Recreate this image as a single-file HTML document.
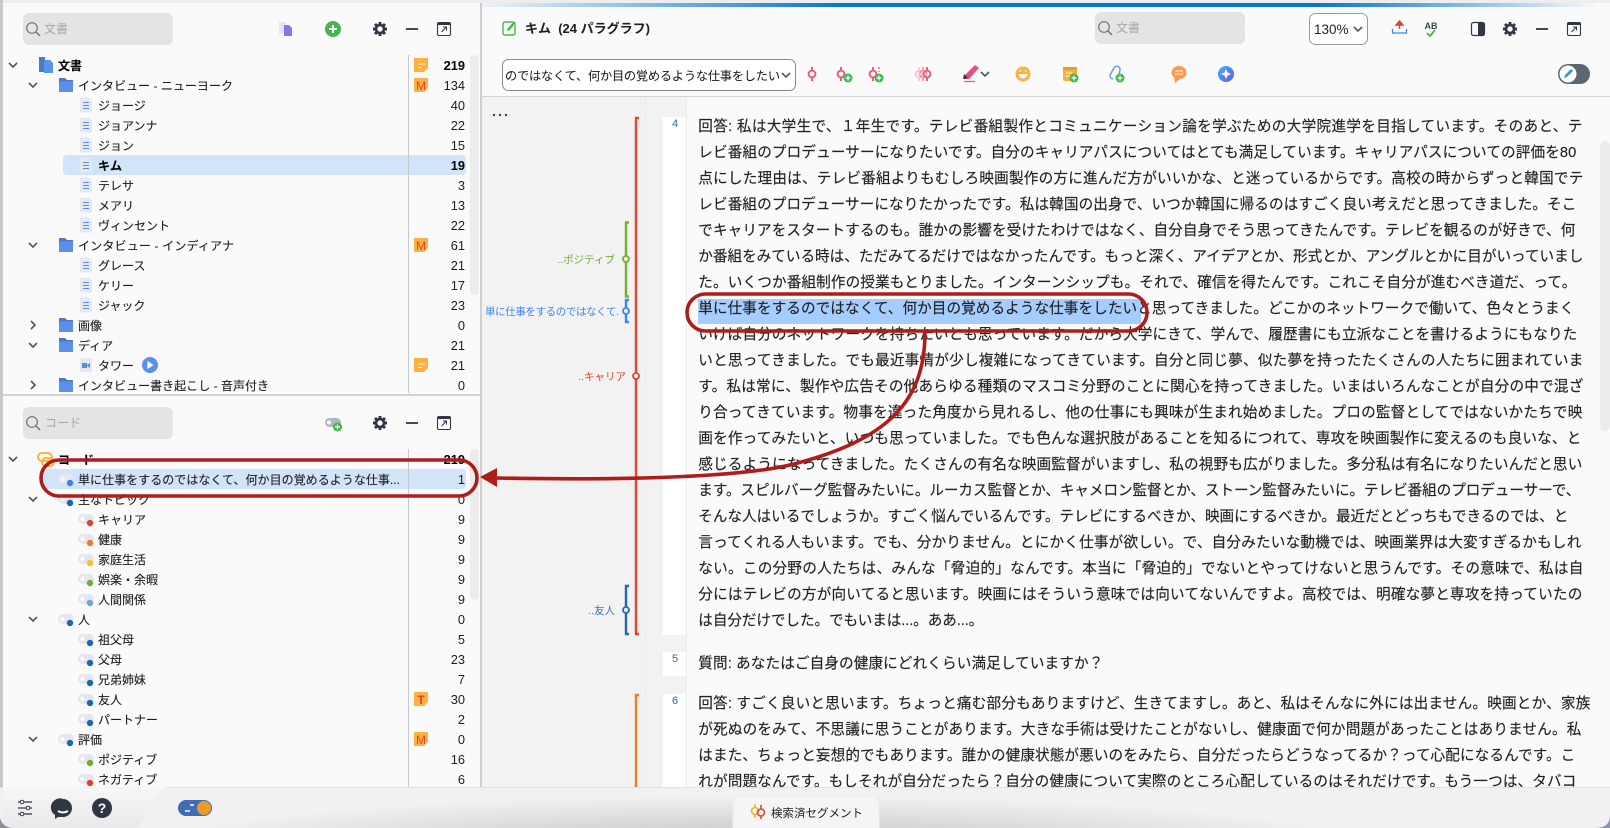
<!DOCTYPE html>
<html lang="ja"><head><meta charset="utf-8"><title>キム</title>
<style>
html,body{margin:0;padding:0;background:#fafafa;width:1610px;height:828px;overflow:hidden}
svg{display:block;font-family:"Liberation Sans","Noto Sans CJK JP",sans-serif}
.l{font-size:12px;fill:#1d1d1f;stroke:#1d1d1f;stroke-width:.12}
.c{font-size:12.8px;fill:#1d1d1f;text-anchor:end}
.b{font-weight:700;fill:#000}
.t{font-size:14.6px;fill:#222;stroke:#222;stroke-width:.14}
.cm{font-size:10.5px}
</style></head><body>
<svg width="1610" height="828" viewBox="0 0 1610 828" xmlns="http://www.w3.org/2000/svg">
<defs>
<linearGradient id="blue" x1="0" x2="1" y1="0" y2="0"><stop offset="0" stop-color="#0a75d0" stop-opacity=".05"/><stop offset=".32" stop-color="#0a75d0"/><stop offset=".75" stop-color="#0a75d0"/><stop offset="1" stop-color="#0a75d0" stop-opacity="0"/></linearGradient>
<linearGradient id="bar" x1="0" x2="0" y1="0" y2="1"><stop offset="0" stop-color="#f7f7f7"/><stop offset="1" stop-color="#e9e9e9"/></linearGradient>
<radialGradient id="glow" gradientUnits="userSpaceOnUse" cx="0" cy="0" r="1" gradientTransform="translate(760 842) scale(600 46)"><stop offset="0" stop-color="#c4c4c4"/><stop offset="1" stop-color="#c4c4c4" stop-opacity="0"/></radialGradient>
<linearGradient id="ai" x1="0" x2="1" y1="0" y2="1"><stop offset="0" stop-color="#3fb4ff"/><stop offset="1" stop-color="#6a52f0"/></linearGradient>
<symbol id="cd" overflow="visible"><path d="M-4 -2 L0 2 L4 -2" fill="none" stroke="#4d5762" stroke-width="1.6"/></symbol>
<symbol id="cr" overflow="visible"><path d="M-2 -4 L2 0 L-2 4" fill="none" stroke="#4d5762" stroke-width="1.6"/></symbol>
<symbol id="doc" overflow="visible"><path d="M-6 -7.500 H3 L6 -4.500 V7.500 H-6Z" fill="#e6e9f0"/><path d="M-3 -2.500H3M-3 .5H3M-3 3.500H3" stroke="#5a8fe8" stroke-width="1"/></symbol>
<symbol id="fold" overflow="visible"><path d="M-7 -7 H-1 L1 -5 H7 V7 H-7Z" fill="#4d78c2"/><rect x="-7" y="-3.500" width="14" height="10.500" rx="1" fill="#5a92ea"/></symbol>
<symbol id="pill" overflow="visible"><rect x="-8" y="-5" width="16" height="10" rx="5" fill="#e4e8ee"/><circle cx="-3.500" cy="0" r="2.200" fill="#fafafa"/></symbol>
<symbol id="bdg" overflow="visible"><path d="M-7 -7 H7 V3 L3 7 H-7 Z" fill="#fdb13f"/></symbol>
<symbol id="gear" overflow="visible"><path d="M0 -7V-3M0 3V7M-7 0H-3M3 0H7M-5 -5L-2 -2M2 2L5 5M-5 5L-2 2M2 -2L5 -5" stroke="#2f3742" stroke-width="2.900"/><circle r="4" fill="none" stroke="#2f3742" stroke-width="2.600"/></symbol>
<symbol id="pop" overflow="visible"><rect x="-6.500" y="-6.500" width="13" height="13" rx="1.500" fill="none" stroke="#2f3742" stroke-width="1.100"/><path d="M-6.500 -6.500H6.500V-4H-6.500Z" fill="#2f3742"/><path d="M-2.500 3 L2.500 -2 M-1 -2H2.500V1.500" fill="none" stroke="#2f3742" stroke-width="1"/></symbol>
<symbol id="mag" overflow="visible"><circle cx="-1" cy="-1" r="5.300" fill="none" stroke="#6b7480" stroke-width="1.200"/><path d="M3 3L7 7" stroke="#6b7480" stroke-width="1.400"/></symbol>
<symbol id="plus" overflow="visible"><circle r="4.500" fill="#45b553"/><path d="M-2.500 0H2.500M0 -2.500V2.500" stroke="#fff" stroke-width="1.200"/></symbol>
<symbol id="seg" overflow="visible"><path d="M0 -7V-3.500M0 3.500V7" stroke="#ee5f7c" stroke-width="2"/><circle r="3.400" fill="none" stroke="#ee5f7c" stroke-width="2"/></symbol>
</defs>

<rect width="1610" height="828" fill="#fafafa"/>
<rect width="1610" height="3" fill="#eeeeee"/>
<rect x="0" y="0" width="3" height="828" fill="#c9c9c9"/>

<!-- top-left panel -->
<rect x="23" y="13" width="150" height="32" rx="6" fill="#e4e4e4"/>
<use href="#mag" x="33" y="29"/>
<text x="44" y="33" font-size="12" fill="#a8a8a8">文書</text>
<path d="M279 22h7v12h-7z" fill="#e2e6f2"/><path d="M284 25h5l3 3v8h-8z" fill="#8a73ee"/>
<circle cx="333" cy="29" r="8" fill="#46b450"/><path d="M329 29h8M333 25v8" stroke="#fff" stroke-width="2"/>
<use href="#gear" x="380" y="29"/>
<path d="M406 29h12" stroke="#2f3742" stroke-width="1.800"/>
<use href="#pop" x="444" y="29"/>

<rect x="63" y="155" width="403" height="20" rx="4" fill="#d1e4fa"/>
<path d="M408.500 55V393" stroke="#c5c8cc" stroke-width="1"/>
<rect x="470" y="55" width="9" height="240" rx="4.500" fill="#ececec"/>

<use href="#cd" x="13" y="65"/>
<path d="M39 57h6v15h-6z" fill="#4d78c2"/><path d="M44 60h6l3 3v10h-9z" fill="#5a92ea"/>
<text x="58" y="70" class="l b">文書</text>
<use href="#bdg" x="421" y="65"/><path d="M418 64h7M418 67.500h4" stroke="#fff" stroke-width="1"/>
<text x="465" y="70" class="c b">219</text>

<use href="#cd" x="33" y="85"/><use href="#fold" x="66" y="85"/><text x="78" y="90" class="l" textLength="155">インタビュー - ニューヨーク</text>
<use href="#bdg" x="421" y="85"/><text x="421" y="90" font-size="12" fill="#e0433a" text-anchor="middle">M</text><text x="465" y="90" class="c">134</text>
<use href="#doc" x="86" y="105"/><text x="98" y="110" class="l">ジョージ</text><text x="465" y="110" class="c">40</text>
<use href="#doc" x="86" y="125"/><text x="98" y="130" class="l">ジョアンナ</text><text x="465" y="130" class="c">22</text>
<use href="#doc" x="86" y="145"/><text x="98" y="150" class="l">ジョン</text><text x="465" y="150" class="c">15</text>
<use href="#doc" x="86" y="165"/><text x="98" y="170" class="l b">キム</text><text x="465" y="170" class="c b">19</text>
<use href="#doc" x="86" y="185"/><text x="98" y="190" class="l">テレサ</text><text x="465" y="190" class="c">3</text>
<use href="#doc" x="86" y="205"/><text x="98" y="210" class="l">メアリ</text><text x="465" y="210" class="c">13</text>
<use href="#doc" x="86" y="225"/><text x="98" y="230" class="l">ヴィンセント</text><text x="465" y="230" class="c">22</text>
<use href="#cd" x="33" y="245"/><use href="#fold" x="66" y="245"/><text x="78" y="250" class="l" textLength="156">インタビュー - インディアナ</text>
<use href="#bdg" x="421" y="245"/><text x="421" y="250" font-size="12" fill="#e0433a" text-anchor="middle">M</text><text x="465" y="250" class="c">61</text>
<use href="#doc" x="86" y="265"/><text x="98" y="270" class="l">グレース</text><text x="465" y="270" class="c">21</text>
<use href="#doc" x="86" y="285"/><text x="98" y="290" class="l">ケリー</text><text x="465" y="290" class="c">17</text>
<use href="#doc" x="86" y="305"/><text x="98" y="310" class="l">ジャック</text><text x="465" y="310" class="c">23</text>
<use href="#cr" x="33" y="325"/><use href="#fold" x="66" y="325"/><text x="78" y="330" class="l">画像</text><text x="465" y="330" class="c">0</text>
<use href="#cd" x="33" y="345"/><use href="#fold" x="66" y="345"/><text x="78" y="350" class="l">ディア</text><text x="465" y="350" class="c">21</text>
<path d="M80 358H92V372H80Z" fill="#e6e9f0"/><rect x="82" y="363" width="5" height="5" fill="#5a8fe8"/><path d="M87 365l3-2v5l-3-2z" fill="#5a8fe8"/>
<text x="98" y="370" class="l">タワー</text>
<circle cx="150" cy="365" r="8" fill="#5a92ea"/><path d="M147.500 361v8l6-4z" fill="#fff"/>
<use href="#bdg" x="421" y="365"/><path d="M418 364h7M418 367.500h4" stroke="#fff" stroke-width="1"/><text x="465" y="370" class="c">21</text>
<use href="#cr" x="33" y="385"/><use href="#fold" x="66" y="385"/><text x="78" y="390" class="l" textLength="191">インタビュー書き起こし - 音声付き</text><text x="465" y="390" class="c">0</text>

<!-- bottom-left panel -->
<rect x="3" y="394" width="478" height="400" fill="#fafafa"/>
<rect x="3" y="394" width="478" height="2" fill="#d2d2d2"/>
<rect x="23" y="407" width="150" height="32" rx="6" fill="#e4e4e4"/>
<use href="#mag" x="33" y="423"/>
<text x="45" y="427" font-size="12" fill="#a8a8a8">コード</text>
<rect x="325" y="418" width="16" height="9" rx="4.500" fill="#aeb6c2"/><circle cx="329" cy="422.500" r="2" fill="#fafafa"/>
<use href="#plus" x="337.500" y="427"/>
<use href="#gear" x="380" y="423"/>
<path d="M406 423h12" stroke="#2f3742" stroke-width="1.800"/>
<use href="#pop" x="444" y="423"/>

<rect x="44" y="469" width="422" height="20" rx="4" fill="#d1e4fa"/>
<path d="M408.500 449V787" stroke="#c5c8cc" stroke-width="1"/>
<rect x="470" y="449" width="9" height="151" rx="4.500" fill="#ececec"/>

<use href="#cd" x="13" y="459"/>
<rect x="38" y="453" width="14" height="8" rx="4" fill="none" stroke="#fdb13f" stroke-width="2"/><rect x="42" y="458" width="12" height="8" rx="4" fill="none" stroke="#fdb13f" stroke-width="2"/>
<text x="58" y="464" class="l b">コード</text><text x="465" y="464" class="c b">219</text>

<use href="#pill" x="66" y="479"/><circle cx="70" cy="483" r="3.200" fill="#3b82f6"/>
<text x="78" y="484" class="l" textLength="322">単に仕事をするのではなくて、何か目の覚めるような仕事...</text><text x="465" y="484" class="c">1</text>

<use href="#cd" x="33" y="499"/><use href="#pill" x="66" y="499"/><circle cx="70" cy="503" r="3.200" fill="#1f66ad"/><text x="78" y="504" class="l">主なトピック</text><text x="465" y="504" class="c">0</text>
<use href="#pill" x="86" y="519"/><circle cx="90" cy="523" r="3.200" fill="#e8432a"/><text x="98" y="524" class="l">キャリア</text><text x="465" y="524" class="c">9</text>
<use href="#pill" x="86" y="539"/><circle cx="90" cy="543" r="3.200" fill="#ee7d22"/><text x="98" y="544" class="l">健康</text><text x="465" y="544" class="c">9</text>
<use href="#pill" x="86" y="559"/><circle cx="90" cy="563" r="3.200" fill="#f3c623"/><text x="98" y="564" class="l">家庭生活</text><text x="465" y="564" class="c">9</text>
<use href="#pill" x="86" y="579"/><circle cx="90" cy="583" r="3.200" fill="#76ad2a"/><text x="98" y="584" class="l">娯楽・余暇</text><text x="465" y="584" class="c">9</text>
<use href="#pill" x="86" y="599"/><circle cx="90" cy="603" r="3.200" fill="#6ba6da"/><text x="98" y="604" class="l">人間関係</text><text x="465" y="604" class="c">9</text>
<use href="#cd" x="33" y="619"/><use href="#pill" x="66" y="619"/><circle cx="70" cy="623" r="3.200" fill="#1f66ad"/><text x="78" y="624" class="l">人</text><text x="465" y="624" class="c">0</text>
<use href="#pill" x="86" y="639"/><circle cx="90" cy="643" r="3.200" fill="#1f66ad"/><text x="98" y="644" class="l">祖父母</text><text x="465" y="644" class="c">5</text>
<use href="#pill" x="86" y="659"/><circle cx="90" cy="663" r="3.200" fill="#1f66ad"/><text x="98" y="664" class="l">父母</text><text x="465" y="664" class="c">23</text>
<use href="#pill" x="86" y="679"/><circle cx="90" cy="683" r="3.200" fill="#1f66ad"/><text x="98" y="684" class="l">兄弟姉妹</text><text x="465" y="684" class="c">7</text>
<use href="#pill" x="86" y="699"/><circle cx="90" cy="703" r="3.200" fill="#1f66ad"/><text x="98" y="704" class="l">友人</text>
<use href="#bdg" x="421" y="699"/><text x="421" y="704" font-size="12" font-weight="700" fill="#e0433a" text-anchor="middle">T</text><text x="465" y="704" class="c">30</text>
<use href="#pill" x="86" y="719"/><circle cx="90" cy="723" r="3.200" fill="#1f66ad"/><text x="98" y="724" class="l">パートナー</text><text x="465" y="724" class="c">2</text>
<use href="#cd" x="33" y="739"/><use href="#pill" x="66" y="739"/><circle cx="70" cy="743" r="3.200" fill="#1f66ad"/><text x="78" y="744" class="l">評価</text>
<use href="#bdg" x="421" y="739"/><text x="421" y="744" font-size="12" fill="#e0433a" text-anchor="middle">M</text><text x="465" y="744" class="c">0</text>
<use href="#pill" x="86" y="759"/><circle cx="90" cy="763" r="3.200" fill="#76ad2a"/><text x="98" y="764" class="l">ポジティブ</text><text x="465" y="764" class="c">16</text>
<use href="#pill" x="86" y="779"/><circle cx="90" cy="783" r="3.200" fill="#e8432a"/><text x="98" y="784" class="l">ネガティブ</text><text x="465" y="784" class="c">6</text>

<!-- main area -->
<rect x="480" y="3" width="2" height="825" fill="#cfcfcf"/>
<rect x="482" y="3" width="1128" height="93" fill="#fafafa"/>
<rect x="480" y="3" width="1120" height="4" fill="url(#blue)"/>
<rect x="482" y="96" width="1128" height="1" fill="#d2d2d2"/>

<rect x="503" y="22" width="12" height="13" rx="2" fill="none" stroke="#46b450" stroke-width="1.400"/><path d="M507 29l7-8 2 2-7 8h-2z" fill="#46b450" stroke="#fafafa" stroke-width=".5"/>
<text x="525" y="33" font-size="13" font-weight="700" fill="#1d1d1f">キム&#160;&#160;(24 パラグラフ)</text>

<rect x="1095" y="12" width="150" height="32" rx="6" fill="#e4e4e4"/>
<use href="#mag" x="1105" y="28"/><text x="1116" y="32" font-size="12" fill="#a8a8a8">文書</text>
<rect x="1309.500" y="13.500" width="58" height="31" rx="6" fill="#fff" stroke="#9a9a9a"/>
<text x="1314" y="34" font-size="13.500" fill="#222">130%</text>
<use href="#cd" x="1358" y="29"/>
<path d="M1392.500 29v4h14v-4" fill="none" stroke="#3b82f6" stroke-width="1.200"/><path d="M1399.500 29v-7M1396 25l3.500-4 3.500 4z" fill="#e0433a" stroke="#e0433a" stroke-width="1.400"/>
<text x="1431" y="29" font-size="9" font-weight="700" fill="#3c4650" text-anchor="middle">AB</text><path d="M1427 33l3 3 5-6" fill="none" stroke="#46b450" stroke-width="1.800"/>
<rect x="1471.500" y="22.500" width="13" height="13" rx="2" fill="none" stroke="#2f3742" stroke-width="1.200"/><rect x="1478" y="23" width="6" height="12" fill="#2f3742"/>
<use href="#gear" x="1510" y="29"/>
<path d="M1536 29h12" stroke="#2f3742" stroke-width="1.800"/>
<use href="#pop" x="1574" y="29"/>

<rect x="502.500" y="59.500" width="293" height="31" rx="6" fill="#fff" stroke="#8a8a8a"/>
<text x="505" y="80" font-size="12.200" fill="#111" textLength="275">のではなくて、何か目の覚めるような仕事をしたい</text>
<use href="#cd" x="786" y="75"/>
<use href="#seg" x="812" y="74"/>
<use href="#seg" x="841" y="74"/><use href="#plus" x="848" y="78"/>
<use href="#seg" x="873" y="74"/><path d="M879 67v2M879 71v1" stroke="#ee5f7c" stroke-width="1.500"/><use href="#plus" x="879" y="78"/>
<g opacity=".3"><use href="#seg" x="919" y="74"/></g><g opacity=".55"><use href="#seg" x="923" y="74"/></g><use href="#seg" x="927" y="74"/>
<path d="M964 76l11-11 4 3-10 11-5 0z" fill="#e0527d"/><path d="M964 74l4 4-5 1z" fill="#2f3742"/><path d="M964 81.500h11" stroke="#e0527d" stroke-width="1.200"/>
<use href="#cd" x="985" y="74"/>
<circle cx="1023" cy="74" r="7.500" fill="#fdb13f"/><path d="M1018.500 74h9a4.500 4.500 0 0 1-9 0z" fill="#fff"/><path d="M1019 71h2.500M1024.500 71h2.500" stroke="#fff" stroke-width="1"/>
<rect x="1063" y="67" width="14" height="14" rx="1.500" fill="#fdb13f"/><rect x="1063" y="67" width="14" height="3" fill="#f39a24"/><path d="M1066 73h6M1066 76h4" stroke="#fff" stroke-width="1"/><use href="#plus" x="1074" y="78"/>
<path d="M1113 79a3.200 3.200 0 0 1-3-4l4-7a3.200 3.200 0 0 1 6 2l-1 5" fill="none" stroke="#5a92ea" stroke-width="1.300"/><use href="#plus" x="1120" y="78"/>
<ellipse cx="1179" cy="72.500" rx="7.500" ry="6.500" fill="#fd9a4d"/><path d="M1174 77l1 6 5-4z" fill="#fd9a4d"/><path d="M1175 71h8M1175 74h8" stroke="#fff" stroke-width="1"/>
<circle cx="1226" cy="74" r="8" fill="url(#ai)"/><path d="M1226 69l1.500 3.500 3.500 1.500-3.500 1.500-1.500 3.500-1.500-3.500-3.500-1.500 3.500-1.500z" fill="#fff"/>
<rect x="1558" y="64" width="32" height="20" rx="10" fill="#5a6672"/><circle cx="1568" cy="74" r="8.500" fill="#fff"/><path d="M1564 78l1-3 6-6 2 2-6 6z" fill="#4a90d9"/>

<!-- gutter -->
<rect x="482" y="97" width="205" height="700" fill="#f2f2f2"/>
<rect x="645" y="97" width="1" height="700" fill="#ebebeb"/>
<rect x="663" y="117" width="23" height="518" fill="#fff"/>
<rect x="663" y="652" width="23" height="24" fill="#fff"/>
<rect x="663" y="694" width="23" height="100" fill="#fff"/>
<rect x="686" y="97" width="1" height="700" fill="#ececec"/>
<circle cx="494" cy="115" r="1.200" fill="#444"/><circle cx="500" cy="115" r="1.200" fill="#444"/><circle cx="506" cy="115" r="1.200" fill="#444"/>
<text x="675" y="127" font-size="11" fill="#2f6aa8" text-anchor="middle">4</text>
<text x="675" y="662" font-size="11" fill="#2f6aa8" text-anchor="middle">5</text>
<text x="675" y="704" font-size="11" fill="#2f6aa8" text-anchor="middle">6</text>

<path d="M639 118H636V634H639" fill="none" stroke="#e3452f" stroke-width="2.400"/>
<circle cx="636" cy="376" r="3" fill="#f1f1f1" stroke="#e3452f" stroke-width="1.800"/>
<text x="626" y="380" class="cm" fill="#e3452f" text-anchor="end">..キャリア</text>
<path d="M629 222.500H626V296.500H629" fill="none" stroke="#76ad2a" stroke-width="2.400"/>
<circle cx="626" cy="259" r="3" fill="#f1f1f1" stroke="#76ad2a" stroke-width="1.800"/>
<text x="615" y="263" class="cm" fill="#76ad2a" text-anchor="end">..ポジティブ</text>
<path d="M629 300H626V322H629" fill="none" stroke="#3f84f0" stroke-width="2.400"/>
<circle cx="626" cy="311" r="3" fill="#f1f1f1" stroke="#3f84f0" stroke-width="1.800"/>
<text x="485" y="315" class="cm" fill="#3f84f0" textLength="134">単に仕事をするのではなくて.</text>
<path d="M629 586H626V634H629" fill="none" stroke="#2468ac" stroke-width="2.400"/>
<circle cx="626" cy="610" r="3" fill="#f1f1f1" stroke="#2468ac" stroke-width="1.800"/>
<text x="615" y="614" class="cm" fill="#3f77b0" text-anchor="end">..友人</text>
<path d="M639 695H636V790" fill="none" stroke="#ee7d22" stroke-width="2.400"/>

<!-- transcript -->
<rect x="698" y="299" width="443" height="25" fill="#a6cdff"/>
<rect x="1600" y="141" width="10" height="290" rx="5" fill="#ececec"/>
<text class="t" x="698.300" y="131" textLength="884">回答: 私は大学生で、１年生です。テレビ番組製作とコミュニケーション論を学ぶための大学院進学を目指しています。そのあと、テ</text>
<text class="t" x="698.300" y="157" textLength="878">レビ番組のプロデューサーになりたいです。自分のキャリアパスについてはとても満足しています。キャリアパスについての評価を80</text>
<text class="t" x="698.300" y="183" textLength="885">点にした理由は、テレビ番組よりもむしろ映画製作の方に進んだ方がいいかな、と迷っているからです。高校の時からずっと韓国でテ</text>
<text class="t" x="698.300" y="209" textLength="878">レビ番組のプロデューサーになりたかったです。私は韓国の出身で、いつか韓国に帰るのはすごく良い考えだと思ってきました。そこ</text>
<text class="t" x="698.300" y="235" textLength="877">でキャリアをスタートするのも。誰かの影響を受けたわけではなく、自分自身でそう思ってきたんです。テレビを観るのが好きで、何</text>
<text class="t" x="698.300" y="261" textLength="885">か番組をみている時は、ただみてるだけではなかったんです。もっと深く、アイデアとか、形式とか、アングルとかに目がいっていまし</text>
<text class="t" x="698.300" y="287" textLength="878">た。いくつか番組制作の授業もとりました。インターンシップも。それで、確信を得たんです。これこそ自分が進むべき道だ、って。</text>
<text class="t" x="698.300" y="313" textLength="876">単に仕事をするのではなくて、何か目の覚めるような仕事をしたいと思ってきました。どこかのネットワークで働いて、色々とうまく</text>
<text class="t" x="698.300" y="339" textLength="879">いけば自分のネットワークを持ちたいとも思っています。だから大学にきて、学んで、履歴書にも立派なことを書けるようにもなりた</text>
<text class="t" x="698.300" y="365" textLength="885">いと思ってきました。でも最近事情が少し複雑になってきています。自分と同じ夢、似た夢を持ったたくさんの人たちに囲まれていま</text>
<text class="t" x="698.300" y="391" textLength="885">す。私は常に、製作や広告その他あらゆる種類のマスコミ分野のことに関心を持ってきました。いまはいろんなことが自分の中で混ざ</text>
<text class="t" x="698.300" y="417" textLength="884">り合ってきています。物事を違った角度から見れるし、他の仕事にも興味が生まれ始めました。プロの監督としてではないかたちで映</text>
<text class="t" x="698.300" y="443" textLength="883">画を作ってみたいと、いつも思っていました。でも色んな選択肢があることを知るにつれて、専攻を映画製作に変えるのも良いな、と</text>
<text class="t" x="698.300" y="469" textLength="884">感じるようになってきました。たくさんの有名な映画監督がいますし、私の視野も広がりました。多分私は有名になりたいんだと思い</text>
<text class="t" x="698.300" y="495" textLength="882">ます。スピルバーグ監督みたいに。ルーカス監督とか、キャメロン監督とか、ストーン監督みたいに。テレビ番組のプロデューサーで、</text>
<text class="t" x="698.300" y="521" textLength="870">そんな人はいるでしょうか。すごく悩んでいるんです。テレビにするべきか、映画にするべきか。最近だとどっちもできるのでは、と</text>
<text class="t" x="698.300" y="547" textLength="883">言ってくれる人もいます。でも、分かりません。とにかく仕事が欲しい。で、自分みたいな動機では、映画業界は大変すぎるかもしれ</text>
<text class="t" x="698.300" y="573" textLength="885">ない。この分野の人たちは、みんな「脅迫的」なんです。本当に「脅迫的」でないとやってけないと思うんです。その意味で、私は自</text>
<text class="t" x="698.300" y="599" textLength="884">分にはテレビの方が向いてると思います。映画にはそういう意味では向いてないんですよ。高校では、明確な夢と専攻を持っていたの</text>
<text class="t" x="698.300" y="625" textLength="285">は自分だけでした。でもいまは...。ああ...。</text>
<text class="t" x="698.300" y="668" textLength="405">質問: あなたはご自身の健康にどれくらい満足していますか？</text>
<text class="t" x="698.300" y="708" textLength="892">回答: すごく良いと思います。ちょっと痛む部分もありますけど、生きてますし。あと、私はそんなに外には出ません。映画とか、家族</text>
<text class="t" x="698.300" y="734" textLength="883">が死ぬのをみて、不思議に思うことがあります。大きな手術は受けたことがないし、健康面で何か問題があったことはありません。私</text>
<text class="t" x="698.300" y="760" textLength="877">はまた、ちょっと妄想的でもあります。誰かの健康状態が悪いのをみたら、自分だったらどうなってるか？って心配になるんです。こ</text>
<text class="t" x="698.300" y="786" textLength="878">れが問題なんです。もしそれが自分だったら？自分の健康について実際のところ心配しているのはそれだけです。もう一つは、タバコ</text>

<!-- bottom bar -->
<rect x="0" y="787" width="1610" height="41" fill="#f1f1f1"/>
<rect x="0" y="787" width="1610" height="41" fill="url(#glow)"/>
<rect x="0" y="787" width="1610" height="1" fill="#e2e2e2"/>
<path d="M3 787H168C156 792 151 800 148 807C145 818 141 828 130 828H14Q3 828 3 818Z" fill="url(#bar)"/>
<path d="M0 828V818Q3 828 14 828Z" fill="#8b8f98"/>
<path d="M1610 815Q1610 828 1596 828H1610Z" fill="#8994b8"/>
<path d="M18 802h14M18 808h14M18 814h14" stroke="#2f3742" stroke-width="1.300"/><circle cx="22" cy="802" r="1.800" fill="#f5f5f5" stroke="#2f3742"/><circle cx="28" cy="808" r="1.800" fill="#f5f5f5" stroke="#2f3742"/><circle cx="22" cy="814" r="1.800" fill="#f5f5f5" stroke="#2f3742"/>
<path d="M63 799a9 9 0 0 1 0 18h-5l-3 2v-4a9 9 0 0 1 8-16z" fill="#2f3742"/><path d="M58 811q5 3 10 0" fill="none" stroke="#fff" stroke-width="2"/>
<circle cx="102" cy="808" r="10" fill="#2f3742"/><text x="102" y="813" font-size="14" font-weight="700" fill="#fff" text-anchor="middle">?</text>
<rect x="178" y="800" width="34" height="16" rx="8" fill="#3e6db5"/><circle cx="204" cy="808" r="7" fill="#e89a2a"/><path d="M185 811h5M190 805h4" stroke="#fff" stroke-width="1.500"/>
<path d="M733 828V804Q733 796 741 796H871Q879 796 879 804V828Z" fill="#f5f5f5" stroke="#ececec"/>
<circle cx="755" cy="811" r="3.500" fill="none" stroke="#f0b429" stroke-width="1.600"/><path d="M755 804v3M755 815v3" stroke="#f0b429" stroke-width="1.600"/>
<circle cx="761" cy="812.500" r="3.500" fill="none" stroke="#e0433a" stroke-width="1.600"/><path d="M761 805v4M761 816v3" stroke="#e0433a" stroke-width="1.600"/>
<text x="771" y="817" font-size="11.500" fill="#222">検索済セグメント</text>

<!-- annotations -->
<g fill="none" stroke="#b01c1a" stroke-width="3.600">
<rect x="687" y="294" width="460" height="37" rx="18.500"/>
<rect x="41" y="460" width="436" height="36" rx="18"/>
<path d="M925 332C925 400 890 440 790 465C730 479 600 480 495 478"/>
</g>
<path d="M480 477L497 468V487Z" fill="#b01c1a"/>
</svg>
</body></html>
